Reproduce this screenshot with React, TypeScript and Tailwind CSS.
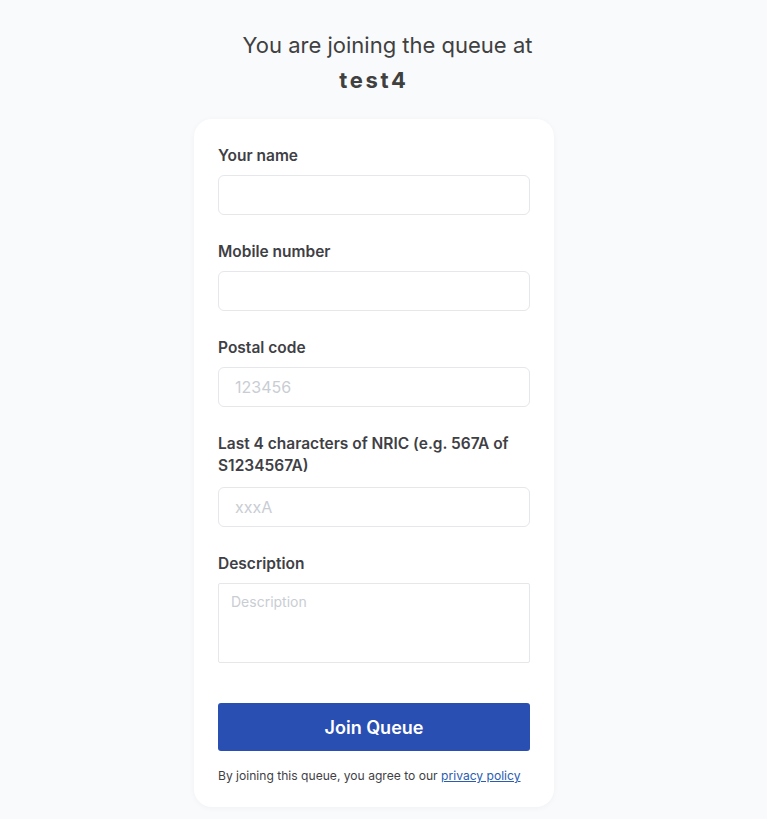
import React from "react";

const font = { fontFamily: "Inter, 'Noto Sans', sans-serif" };

const Field = ({ label, placeholder, gap = "mb-[8px]" }: { label: string; placeholder?: string; gap?: string }) => (
  <div className="flex flex-col">
    <label className={`pt-[1px] text-[15.5px] font-semibold leading-[22px] text-[#3f3f46] ${gap}`}>{label}</label>
    <input
      className="h-[40px] w-full rounded-md border border-[#e5e7eb] bg-white px-4 text-[16px] text-[#3f3f46] placeholder:text-[#c9cdd3] outline-none"
      placeholder={placeholder}
    />
  </div>
);

const App = () => {
  return (
    <div className="min-h-screen bg-[#f8fafc] pt-[30px] pb-[13px]" style={font}>
      <div className="flex flex-col items-center pr-[19px]">
        <h2 className="ml-[27px] text-[22px] leading-[30px] text-[#404040]">You are joining the queue at</h2>
        <h1 className="mt-[5px] text-[22px] font-bold leading-[30px] tracking-[0.12em] text-[#404040]">test4</h1>
        <div className="mt-[24px] w-[360px] rounded-[18px] bg-white px-6 pt-[25px] pb-[22px] shadow-[0_1px_6px_rgba(15,23,42,0.04)]">
          <div className="flex flex-col gap-[25px]">
            <Field label="Your name" />
            <Field label="Mobile number" />
            <Field label="Postal code" placeholder="123456" />
            <Field label="Last 4 characters of NRIC (e.g. 567A of S1234567A)" placeholder="xxxA" gap="mb-[10px]" />
            <div className="flex flex-col">
              <label className="pt-[1px] text-[15.5px] font-semibold leading-[22px] text-[#3f3f46] mb-[8px]">Description</label>
              <textarea
                className="h-[80px] w-full resize-none rounded-[2px] border border-[#e5e7eb] px-3 py-[7px] text-[14px] text-[#3f3f46] placeholder:text-[#c9cdd3] outline-none"
                placeholder="Description"
              />
            </div>
          </div>
          <button className="mt-[40px] h-[48px] w-full rounded-[3px] bg-[#2a4fb3] text-[18px] font-semibold text-white">
            Join Queue
          </button>
          <p className="mt-[16px] whitespace-nowrap text-[12.1px] leading-[18px] text-[#3f3f46]">
            By joining this queue, you agree to our{" "}
            <a href="#" className="text-[#2a5db0] underline">privacy policy</a>
          </p>
        </div>
      </div>
    </div>
  );
};

export default App;
